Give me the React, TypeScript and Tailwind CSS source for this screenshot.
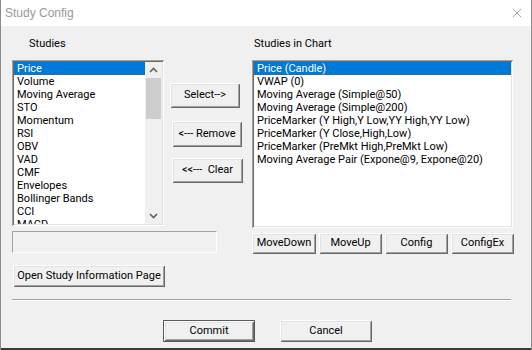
import { X } from "lucide-react";

const LEFT_STUDIES = [
  "Price",
  "Volume",
  "Moving Average",
  "STO",
  "Momentum",
  "RSI",
  "OBV",
  "VAD",
  "CMF",
  "Envelopes",
  "Bollinger Bands",
  "CCI",
  "MACD",
];

const CHART_STUDIES = [
  "Price (Candle)",
  "VWAP (0)",
  "Moving Average (Simple@50)",
  "Moving Average (Simple@200)",
  "PriceMarker (Y High,Y Low,YY High,YY Low)",
  "PriceMarker (Y Close,High,Low)",
  "PriceMarker (PreMkt High,PreMkt Low)",
  "Moving Average Pair (Expone@9, Expone@20)",
];

// classic 3d edges
const raised =
  "shadow-[inset_1px_1px_0_#ffffff,inset_-1px_-1px_0_#696969,inset_2px_2px_0_#e3e3e3,inset_-2px_-2px_0_#a0a0a0]";
const sunken =
  "shadow-[inset_1px_1px_0_#a0a0a0,inset_-1px_-1px_0_#ffffff,inset_2px_2px_0_#696969,inset_-2px_-2px_0_#e3e3e3]";

function Button({ label, className = "" }: { label: string; className?: string }) {
  return (
    <div
      className={`flex items-center justify-center bg-[#f0f0f0] text-black whitespace-pre text-[11px] ${raised} ${className}`}
    >
      {label}
    </div>
  );
}

function Chevron({ up }: { up?: boolean }) {
  return (
    <svg width="9" height="6" viewBox="0 0 9 6">
      <path
        d={up ? "M1 5 L4.5 1.5 L8 5" : "M1 1 L4.5 4.5 L8 1"}
        fill="none"
        stroke="#606060"
        strokeWidth="1.6"
      />
    </svg>
  );
}

function ListRow({ text, selected }: { text: string; selected?: boolean }) {
  return (
    <div
      className={`h-[13px] leading-[13px] pl-[3px] whitespace-nowrap ${
        selected ? "bg-[#0078d7] text-white" : "text-black"
      }`}
    >
      {text}
    </div>
  );
}

export default function App() {
  return (
    <div className="w-[532px] h-[350px] flex flex-col overflow-hidden border-x border-[#8c8c8c] font-[family-name:Roboto,'Liberation_Sans',sans-serif] text-[11px]">
      {/* Title bar */}
      <div className="h-[26px] bg-white flex items-center pl-[4px] shrink-0">
        <span className="text-[12px] text-[#999] font-[family-name:'Liberation_Sans',sans-serif]">
          Study Config
        </span>
        <X className="ml-auto mr-[6px] w-[16px] h-[16px] text-[#777]" strokeWidth={1} />
      </div>

      {/* Dialog body */}
      <div className="flex-1 bg-[#f0f0f0] pl-[11px] pt-[11px]">
        <div className="flex">
          {/* Left side - available studies */}
          <div className="w-[240px] flex flex-col">
            <div className="h-[13px] leading-[13px] pl-[17px]">Studies</div>
            <div className="flex mt-[10px]">
              <div className={`w-[152px] h-[166px] bg-white p-[2px] flex ${sunken}`}>
                <div className="flex-1 overflow-hidden">
                  {LEFT_STUDIES.map((s, i) => (
                    <ListRow key={s} text={s} selected={i === 0} />
                  ))}
                </div>
                {/* Scrollbar */}
                <div className="w-[17px] bg-[#f0f0f0] flex flex-col">
                  <div className="h-[16px] flex items-center justify-center">
                    <Chevron up />
                  </div>
                  <div className="h-[41px] mx-[1px] bg-[#cdcdcd]" />
                  <div className="flex-1" />
                  <div className="h-[17px] flex items-center justify-center">
                    <Chevron />
                  </div>
                </div>
              </div>

              {/* Middle buttons */}
              <div className="ml-[6px] pt-[23px] flex flex-col">
                <Button label="Select-->" className="w-[70px] h-[25px]" />
                <Button label="<--- Remove" className="w-[70px] h-[26px] mt-[13px] ml-[2px]" />
                <Button label="<<---  Clear" className="w-[71px] h-[25px] mt-[11px] ml-[2px]" />
              </div>
            </div>

            {/* Disabled info box */}
            <div className="mt-[5px] w-[205px] h-[22px] border-t border-l border-[#a0a0a0] border-r border-b border-r-white border-b-white" />

            <Button label="Open Study Information Page" className="mt-[12px] ml-[1px] w-[152px] h-[22px]" />
          </div>

          {/* Right side - studies in chart */}
          <div className="flex flex-col">
            <div className="h-[13px] leading-[13px] pl-[2px]">Studies in Chart</div>
            <div className={`mt-[10px] w-[261px] h-[168px] bg-white p-[2px] overflow-hidden ${sunken}`}>
              {CHART_STUDIES.map((s, i) => (
                <ListRow key={s} text={s} selected={i === 0} />
              ))}
            </div>
            <div className="mt-[5px] flex gap-[3px]">
              <Button label="MoveDown" className="w-[64px] h-[21px]" />
              <Button label="MoveUp" className="w-[63px] h-[21px]" />
              <Button label="Config" className="w-[63px] h-[21px]" />
              <Button label="ConfigEx" className="w-[63px] h-[21px]" />
            </div>
          </div>
        </div>

        {/* Separator */}
        <div className="mt-[12px] w-[499px] h-[2px] border-t border-[#a0a0a0] border-b border-b-white" />

        {/* Commit / Cancel */}
        <div className="mt-[19px] flex">
          <div className="ml-[151px] w-[92px] h-[22px] border border-[#5a5a5a]">
            <Button label="Commit" className="w-full h-full" />
          </div>
          <Button label="Cancel" className="ml-[25px] w-[92px] h-[22px]" />
        </div>
      </div>

      <div className="h-[2px] bg-[#3a3a3a] shrink-0" />
    </div>
  );
}
